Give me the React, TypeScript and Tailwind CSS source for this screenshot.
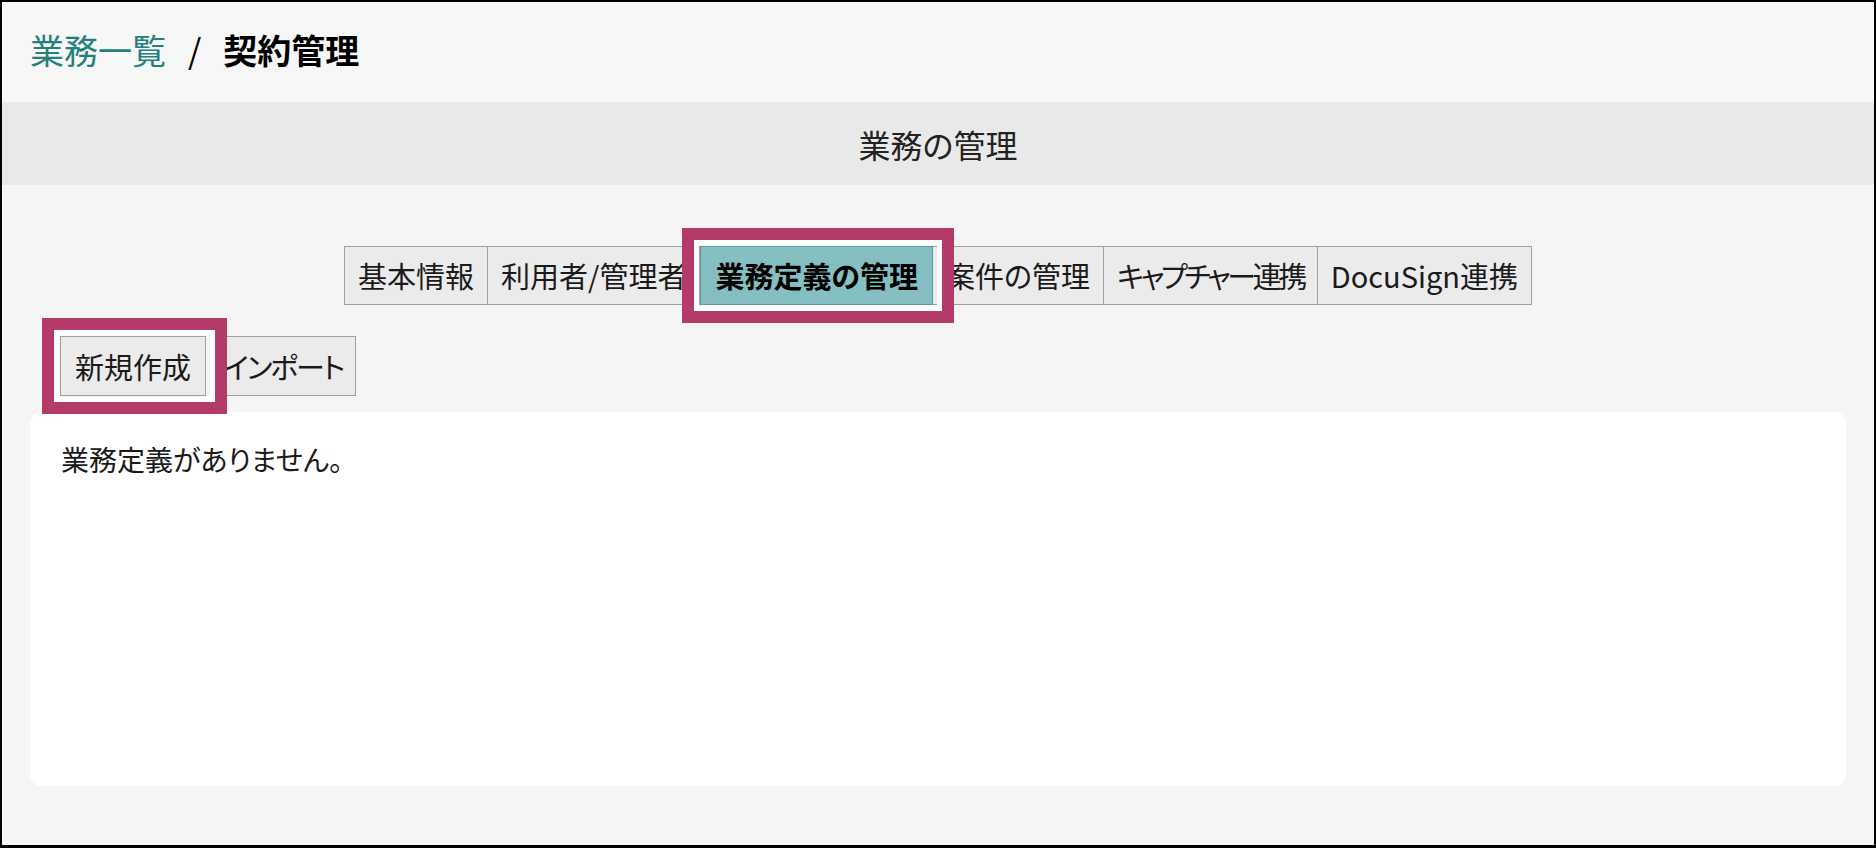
import { ReactNode } from "react";

const tabs = [
  "基本情報",
  "利用者/管理者",
  "業務定義の管理",
  "案件の管理",
  "キャプチャー連携",
  "DocuSign連携",
];

const ACTIVE = "業務定義の管理";

// Pink annotation frame drawn over a control
const Highlight = ({ children }: { children: ReactNode }) => (
  <div className="relative">
    {children}
    <span className="pointer-events-none absolute -top-[18px] -bottom-[18px] -left-[18px] -right-[21px] border-[12px] border-[#b43a6a]">
      <span className="block h-full w-full border-[5px] border-white" />
    </span>
  </div>
);

export default function App() {
  return (
    <div
      className="h-screen w-full bg-black pt-[2px] pl-[2px] pr-[2px] pb-[3px] text-black [font-feature-settings:'palt']"
      style={{ fontFamily: '"Noto Sans CJK JP", "Noto Sans", sans-serif' }}
    >
      <div className="flex h-full flex-col bg-[#f5f5f5]">
        {/* Breadcrumb */}
        <div className="flex h-[100px] items-center bg-[#f7f7f7] pb-[4px] pl-[28px] text-[34px] leading-none">
          <span className="text-[#23807d]">業務一覧</span>
          <span className="mx-[22px]">/</span>
          <span className="font-bold">契約管理</span>
        </div>

        {/* Section header */}
        <div className="flex h-[83px] items-center justify-center bg-[#e9e9e9] text-[32px] text-[#222]">
          業務の管理
        </div>

        {/* Tabs */}
        <div className="mt-[61px] flex justify-center">
          {tabs.map((tab, i) => {
            const active = tab === ACTIVE;
            const narrow = tab === "キャプチャー連携";
            const btn = (
              <button
                key={tab}
                className={
                  active
                    ? "border border-[#5d9c9f] bg-[#86bfc2] px-[14px] py-[7px] text-[29px] leading-[43px] font-bold text-black"
                    : `border border-[#a0a0a0] bg-[#ebebeb] px-[13px] py-[7px] text-[29px] leading-[43px] text-[#1a1a1a] ${i > 0 ? "-ml-px" : ""} ${narrow ? "tracking-[-3.4px]" : ""}`
                }
              >
                {tab}
              </button>
            );
            return active ? (
              <Highlight key={tab}>{btn}</Highlight>
            ) : (
              btn
            );
          })}
        </div>

        {/* Actions */}
        <div className="mt-[31px] flex gap-[4px] pl-[58px]">
          <Highlight>
            <button className="border border-[#a0a0a0] bg-[#ebebeb] px-[14px] py-[7px] text-[29px] leading-[44px] text-[#1a1a1a]">
              新規作成
            </button>
          </Highlight>
          <button className="border border-[#a0a0a0] bg-[#ebebeb] px-[12px] py-[7px] text-[29px] leading-[44px] tracking-[-2px] text-[#1a1a1a]">
            インポート
          </button>
        </div>

        {/* Content */}
        <div className="mx-[28px] mt-[16px] h-[374px] rounded-[12px] bg-white px-[31px] pt-[26px] text-[28px] text-[#1a1a1a]">
          業務定義がありません。
        </div>
      </div>
    </div>
  );
}
